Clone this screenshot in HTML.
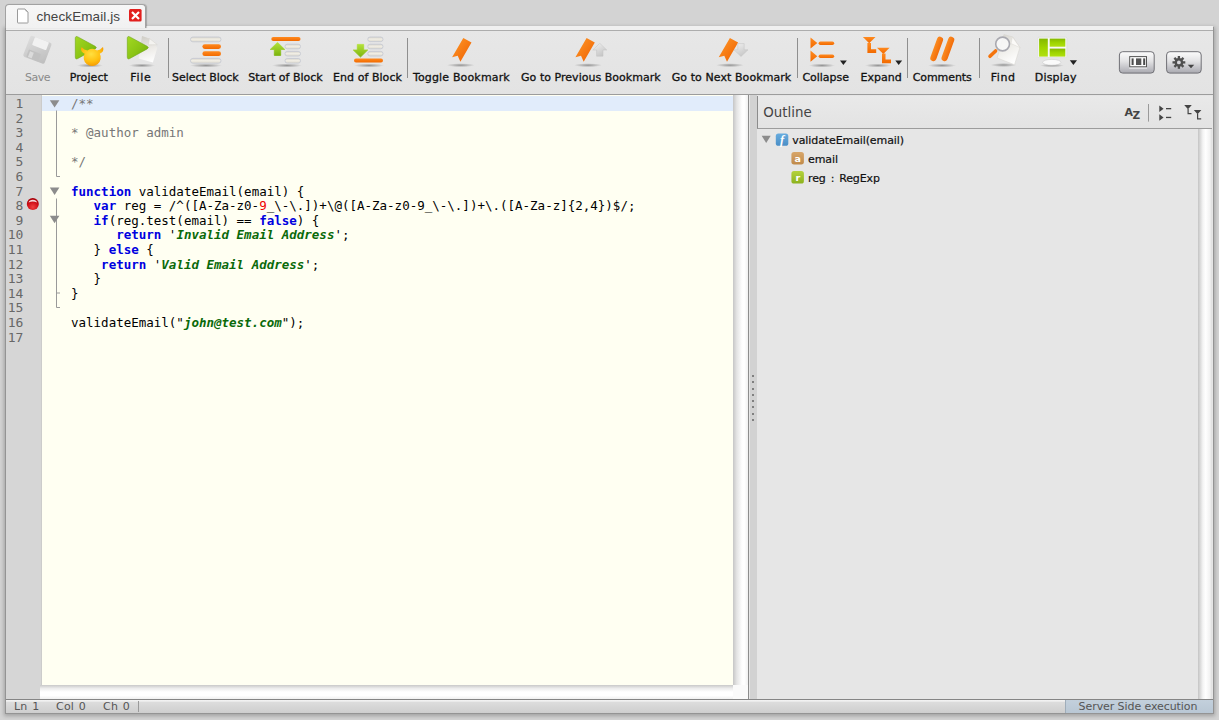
<!DOCTYPE html>
<html><head><meta charset="utf-8"><title>checkEmail.js</title>
<style>
html,body{margin:0;padding:0}
body{width:1219px;height:720px;overflow:hidden;background:#d3d3d3;position:relative;font-family:"DejaVu Sans","Liberation Sans",sans-serif;font-size:11px;color:#111}
.abs{position:absolute}
#frame{left:6px;top:28px;width:1207px;height:685px;background:#e5e5e5;box-shadow:0 0 0 1px #949494,0 1px 4px 2px rgba(0,0,0,.24)}
#tab{left:5px;top:4px;width:141px;height:24px;box-sizing:border-box;border:1px solid #a2a2a2;border-bottom:none;border-radius:4px 4px 0 0;background:linear-gradient(#f7f7f7,#f1f1f1);z-index:3;box-shadow:1px 0 1px rgba(0,0,0,.22)}
#tab .t{left:30.4px;top:3.6px;font:13.5px "Liberation Sans",sans-serif;color:#444;white-space:nowrap;letter-spacing:.1px}
#tabstrip{left:6px;top:26px;width:1207px;height:4px;background:#f0f0f0;border-bottom:1px solid #adadad;z-index:2}
#toolbar{left:6px;top:31px;width:1207px;height:63px;background:linear-gradient(#e7e7e7,#e3e3e3);border-bottom:1px solid #9c9c9c}
.lbl{position:absolute;top:71.3px;transform:translateX(-50%);white-space:nowrap;font-size:11px;line-height:14px;color:#111;font-weight:normal;-webkit-text-stroke:.3px #111}
.sep{position:absolute;top:38px;width:1px;height:40px;background:#8f8f8f}
#gutter{left:6px;top:95px;width:35.6px;height:604px;background:#d6d6d6;border-right:1.8px solid #cccccb;box-sizing:border-box}
#code{left:41.6px;top:95px;width:691.4px;height:590px;background:#fffff2}
#hl{left:41.6px;top:96px;width:691.4px;height:15.3px;background:#e1ecfb}
pre{margin:0}
.ln{position:absolute;left:5.6px;width:17.8px;text-align:right;font:13px/14.6px "DejaVu Sans Mono","Liberation Mono",monospace;color:#686868;white-space:pre}
.cl{position:absolute;left:71px;font:12.5px/14.6px "DejaVu Sans Mono","Liberation Mono",monospace;color:#000;white-space:pre}
.k{color:#0000e0;font-weight:bold}
.s{color:#0a6a0a;font-weight:bold;font-style:italic}
.c{color:#777}
.r{color:#e00}
#vsb{left:733px;top:95px;width:15px;height:590px;background:linear-gradient(90deg,#c6c6c6,#e4e4e4 25%,#fdfdfd 60%,#fff 75%,#f0f0f0)}
#hsb{left:40px;top:685px;width:693px;height:14px;background:linear-gradient(#c9c9c9,#ededed 25%,#fff 50%,#fff 75%,#f0f0f0)}
#split{left:748px;top:95px;width:9px;height:604px;background:linear-gradient(90deg,#e6e6e6 0,#e6e6e6 1px,#d2d2d2 1.5px);border-left:1px solid #8c8c8c;box-sizing:border-box}
#outline{left:757px;top:96px;width:455px;height:603px;background:#e6e6e6}
#ohead{left:757px;top:96px;width:454px;height:32px;border-bottom:1px solid #9c9c9c;border-left:1px solid #8c8c8c;background:linear-gradient(#e9e9e9,#e3e3e3)}
#osb{left:1198px;top:129px;width:14px;height:570px;background:linear-gradient(90deg,#c4c4c4,#f4f4f4 35%,#fff 55%,#f2f2f2 85%,#ddd)}
#status{left:6px;top:699px;width:1207px;height:14px;background:linear-gradient(#f4f4f4 0,#eee 1.2px,#dcdcdc 2.5px,#cecece 100%);border-top:1px solid #858585;box-sizing:border-box}
.st{position:absolute;top:700px;font-size:11px;line-height:14px;color:#555;white-space:nowrap;word-spacing:1px;letter-spacing:.2px}
.oi{position:absolute;font-size:11px;line-height:14px;letter-spacing:-.1px;color:#111;white-space:nowrap;-webkit-text-stroke:.2px #111}
</style></head><body>
<div id="frame" class="abs"></div>
<div id="tabstrip" class="abs"></div>
<div id="tab" class="abs">
 <svg class="abs" style="left:10px;top:3px" width="13" height="16" viewBox="0 0 13 16"><path d="M1.500 1.500q0-.5.500-.5h7l3 3v10.500q0 .5-.5.500h-9.500q-.500 0-.500-.500z" fill="#fff" stroke="#9a9a9a"/><path d="M9 1q.2 2.600 3 3" fill="none" stroke="#b0b0b0" stroke-width=".8"/></svg>
 <span class="abs t">checkEmail.js</span>
 <svg class="abs" style="left:123.300px;top:3.500px" width="13" height="13" viewBox="0 0 13 13"><rect width="12.600" height="12.600" rx="1.500" fill="#e2201e"/><path d="M3 3l7 7M10 3l-7 7" stroke="#fff" stroke-width="2.2"/></svg>
</div>
<div id="toolbar" class="abs"></div>
<!--TOOLBAR-->
<svg class="abs" style="left:0;top:0" width="1219" height="95" viewBox="0 0 1219 95">
<defs>
<linearGradient id="og" x1="0" y1="0" x2="0" y2="1"><stop offset="0" stop-color="#ff8a1f"/><stop offset="1" stop-color="#f26a00"/></linearGradient>
<linearGradient id="og2" x1="0" y1="0" x2="1" y2="1"><stop offset="0" stop-color="#ff9a2a"/><stop offset="1" stop-color="#ee5e00"/></linearGradient>
<linearGradient id="gg" x1="0" y1="0" x2="0" y2="1"><stop offset="0" stop-color="#b4e23a"/><stop offset="1" stop-color="#7cb40e"/></linearGradient>
<linearGradient id="gg2" x1="0" y1="0" x2="1" y2="1"><stop offset="0" stop-color="#a2d822"/><stop offset=".55" stop-color="#8ac414"/><stop offset="1" stop-color="#6aa60c"/></linearGradient>
<linearGradient id="cr" x1="0" y1="0" x2="0" y2="1"><stop offset="0" stop-color="#d6d3c9"/><stop offset=".45" stop-color="#f0ede4"/><stop offset="1" stop-color="#dedbd0"/></linearGradient>
<linearGradient id="btn" x1="0" y1="0" x2="0" y2="1"><stop offset="0" stop-color="#fcfcfc"/><stop offset=".45" stop-color="#e2e2e4"/><stop offset="1" stop-color="#a9a9b0"/></linearGradient>
<radialGradient id="sh"><stop offset="0" stop-color="#000" stop-opacity=".35"/><stop offset="1" stop-color="#000" stop-opacity="0"/></radialGradient>
<radialGradient id="yl" cx=".45" cy=".35" r=".7"><stop offset="0" stop-color="#ffe040"/><stop offset=".6" stop-color="#ffc010"/><stop offset="1" stop-color="#f59a00"/></radialGradient>
<linearGradient id="pp" x1=".3" y1="0" x2=".5" y2="1"><stop offset="0" stop-color="#cfcdc6"/><stop offset=".5" stop-color="#eceae6"/><stop offset="1" stop-color="#fdfdfd"/></linearGradient>
<linearGradient id="fl" x1="0" y1="0" x2="1" y2="1"><stop offset="0" stop-color="#dcdcdc"/><stop offset="1" stop-color="#b4b4b4"/></linearGradient>
<linearGradient id="lg" x1="0" y1="0" x2="0" y2="1"><stop offset="0" stop-color="#84b800"/><stop offset=".5" stop-color="#9ed400"/><stop offset="1" stop-color="#b0e010"/></linearGradient>
<linearGradient id="pp2" x1=".2" y1="0" x2=".6" y2="1"><stop offset="0" stop-color="#d8d6d0"/><stop offset=".5" stop-color="#efeeea"/><stop offset="1" stop-color="#fff"/></linearGradient>
<linearGradient id="ar" x1="0" y1="0" x2=".6" y2="1"><stop offset="0" stop-color="#f2f2f2"/><stop offset="1" stop-color="#c6c6c6"/></linearGradient>
</defs>
<!-- shadows -->
<g fill="url(#sh)">
<ellipse cx="90" cy="65.500" rx="13" ry="2"/>
<ellipse cx="142" cy="65.500" rx="13" ry="2"/>
<ellipse cx="206" cy="65.500" rx="16" ry="2"/>
<ellipse cx="287" cy="65.500" rx="15" ry="2"/>
<ellipse cx="369" cy="65.500" rx="15" ry="2"/>
<ellipse cx="460.700" cy="65.200" rx="14" ry="2"/>
<ellipse cx="588" cy="65.200" rx="14" ry="2"/>
<ellipse cx="730" cy="65.200" rx="14" ry="2"/>
<ellipse cx="822" cy="65.500" rx="13" ry="2"/>
<ellipse cx="878" cy="65.500" rx="13" ry="2"/>
<ellipse cx="942" cy="65.500" rx="14" ry="2"/>
<ellipse cx="1003.500" cy="65" rx="13" ry="2"/>
<ellipse cx="1052" cy="65.500" rx="12" ry="1.800"/>
</g>
<!-- Save (disabled floppy) -->
<g transform="translate(37.400 49.800) rotate(21)" opacity=".8">
<rect x="-11.400" y="-11.200" width="22.800" height="22.400" rx="2" fill="url(#fl)"/>
<rect x="-6.800" y="-11.200" width="15" height="8.600" rx="1" fill="#f4f4f4"/>
<rect x="-8" y="2.600" width="13" height="8" rx="1" fill="#b9b9b9"/>
<rect x="-6.300" y="4" width="4" height="6" fill="#d9d9d9"/>
</g>
<!-- Project -->
<path d="M75.300 38.400q0-2.800 2.500-1.500l17.400 9.400q2.200 1.300 0 2.600l-17.400 9.600q-2.500 1.300-2.500-1.500z" fill="url(#gg2)" stroke="#6fa614" stroke-width=".6"/>
<path d="M81.800 48q-.9 3.600 3.600 5.500a7.900 7.900 0 1 0 13.600 0q4.500-1.900 3.600-5.500-1.300 2.600-5.600 3.200a7.900 7.900 0 0 0-9.600 0q-4.300-.6-5.600-3.200z" fill="url(#yl)" stroke="url(#yl)" stroke-width="1.300" stroke-linejoin="round"/>
<!-- File -->
<path d="M142 35.900l7.500 2.600 7.800 9.200-4.400 14.800-14.300-4z" fill="url(#pp)"/>
<path d="M149.500 38.500l-1.200 6.300 9-.1z" fill="#f4f3f0" stroke="#cfccc6" stroke-width=".4"/>
<path d="M127.300 38.400q0-2.800 2.500-1.500l17.400 9.400q2.200 1.300 0 2.600l-17.400 9.600q-2.500 1.300-2.500-1.500z" fill="url(#gg2)" stroke="#6fa614" stroke-width=".6"/>
<!-- Select Block -->
<g>
<rect x="190.500" y="37" width="30.500" height="4.800" rx="2.400" fill="url(#cr)" stroke="#c6cad2" stroke-width=".9"/>
<rect x="202.400" y="44.200" width="18.600" height="4.800" rx="2.400" fill="url(#og)"/>
<rect x="202.400" y="51.300" width="18.600" height="4.800" rx="2.400" fill="url(#og)"/>
<rect x="190.500" y="58.400" width="30.500" height="4.800" rx="2.400" fill="url(#cr)" stroke="#c6cad2" stroke-width=".9"/>
</g>
<!-- Start of Block -->
<g>
<rect x="271.300" y="37" width="29.200" height="4" rx="2" fill="url(#og)"/>
<rect x="285" y="44.200" width="15.500" height="4.600" rx="2.300" fill="url(#cr)" stroke="#c6cad2" stroke-width=".9"/>
<rect x="285" y="51.400" width="15.500" height="4.600" rx="2.300" fill="url(#cr)" stroke="#c6cad2" stroke-width=".9"/>
<rect x="285" y="58.500" width="15.500" height="4.600" rx="2.300" fill="url(#cr)" stroke="#c6cad2" stroke-width=".9"/>
<path d="M277.500 42.400l7.200 7h-4v6h-6.400v-6h-4z" fill="url(#gg)" stroke="url(#gg)" stroke-width=".8" stroke-linejoin="round"/>
</g>
<!-- End of Block -->
<g>
<rect x="367.800" y="37" width="15.200" height="4.600" rx="2.300" fill="url(#cr)" stroke="#c6cad2" stroke-width=".9"/>
<rect x="367.800" y="44.200" width="15.200" height="4.600" rx="2.300" fill="url(#cr)" stroke="#c6cad2" stroke-width=".9"/>
<rect x="367.800" y="51.400" width="15.200" height="4.600" rx="2.300" fill="url(#cr)" stroke="#c6cad2" stroke-width=".9"/>
<rect x="354" y="58.500" width="29" height="4" rx="2" fill="url(#og)"/>
<path d="M360.500 57l-7.200-7h4v-5.600h6.400v5.600h4z" fill="url(#gg)" stroke="url(#gg)" stroke-width=".8" stroke-linejoin="round"/>
</g>
<!-- Bookmarks -->
<path id="rb" d="M463.300 38.100l8.200 4.400-11.100 19.200-2.700-5.900-5.600 1.500z" fill="url(#og2)"/>
<path d="M586.600 38.100l8.200 4.400-11.100 19.200-2.700-5.900-5.600 1.500z" fill="url(#og2)"/>
<path d="M729.900 38.100l8.200 4.400-11.100 19.200-2.700-5.900-5.600 1.500z" fill="url(#og2)"/>
<path d="M599.800 43.300l7 6.700h-3.800v6.200h-6.400v-6.200h-3.800z" fill="url(#ar)" stroke="#c2c2c2" stroke-width=".5"/>
<path d="M741 56.500l-7-6.700h3.800v-6.200h6.400v6.200h3.800z" fill="url(#ar)" stroke="#c2c2c2" stroke-width=".5"/>
<!-- Collapse -->
<g fill="url(#og)">
<path d="M810.500 37.400l6.800 5.600-6.800 5.600z"/>
<path d="M810.500 50.600l6.800 5.600-6.800 5.600z"/>
<rect x="818.600" y="41.400" width="15.600" height="3.500" rx="1.750"/>
<rect x="818.600" y="54.500" width="15.600" height="3.500" rx="1.750"/>
</g>
<path d="M840 60.400h6.800l-3.400 4.600z" fill="#222"/>
<!-- Expand -->
<g fill="url(#og)">
<path d="M862.900 37.100h12.600l-6.300 6.200z"/>
<path d="M867.400 43h3.600v6.200h5.200v3.700h-8.800z"/>
<path d="M877 47.700h12.600l-6.300 6.200z"/>
<path d="M882 53.500h3.500v6h5.500v3.700h-9z"/>
</g>
<path d="M895.300 60.400h6.800l-3.400 4.600z" fill="#222"/>
<!-- Comments -->
<g stroke-width="6.200" stroke-linecap="round" fill="none">
<path d="M940 39.800l-6.600 18.200" stroke="url(#og2)"/>
<path d="M951.200 39.800l-6.600 18.200" stroke="url(#og2)"/>
</g>
<!-- Find -->
<path d="M1003.900 34.500l8.800 2.400 7.200 10.600-5.400 17.200-17.400-6.700z" fill="url(#pp2)" stroke="#d4d2cc" stroke-width=".5"/>
<path d="M1012.500 37l-1.500 6.500 8.800 4z" fill="#fbfaf8" stroke="#d4d2cc" stroke-width=".4"/>
<path d="M995.600 51l-5.600 5.300" stroke="#f4740c" stroke-width="3.600" stroke-linecap="round"/>
<circle cx="1002.600" cy="44" r="6.900" fill="#fafafa" fill-opacity=".82" stroke="#a9a9b0" stroke-width="1.600"/>
<!-- Display -->
<rect x="1037.800" y="37.200" width="29" height="20.400" rx="1.200" fill="#f8f8f8" stroke="#d6d6d6" stroke-width=".6"/>
<rect x="1039.100" y="38.600" width="8.700" height="18" fill="url(#lg)"/>
<rect x="1049.700" y="38.600" width="15.600" height="8.100" fill="url(#lg)"/>
<rect x="1049.700" y="48.600" width="15.600" height="8" fill="url(#lg)"/>
<path d="M1049.500 57.600h4.800l.8 4h-6.400z" fill="#e4e4e4"/>
<ellipse cx="1051.800" cy="62.300" rx="9.200" ry="2.900" fill="#fafafa" stroke="#cdcdcd" stroke-width=".6"/>
<path d="M1069.800 60.300h7.200l-3.600 4.600z" fill="#222"/>
<!-- Buttons -->
<rect x="1119.400" y="51.700" width="34.800" height="21.400" rx="3.300" fill="url(#btn)" stroke="#707076" stroke-width="1"/>
<rect x="1166.600" y="51.700" width="34.600" height="21.400" rx="3.300" fill="url(#btn)" stroke="#707076" stroke-width="1"/>
<rect x="1129.200" y="67.300" width="17.800" height="1.200" fill="#fff" opacity=".9"/>
<rect x="1129.700" y="56.600" width="16.800" height="10.200" fill="#fcfcfc" stroke="#555" stroke-width="1"/>
<rect x="1131.600" y="58.400" width="2" height="6.600" fill="#4a4a4a"/><rect x="1136" y="58.400" width="5.300" height="6.600" fill="#555"/><rect x="1143.200" y="58.400" width="2" height="6.600" fill="#4a4a4a"/>
<g transform="translate(1178.900 62.400)" fill="#505050">
<circle r="4.300"/>
<rect x="-1.150" y="-6.400" width="2.300" height="12.800"/><rect x="-6.400" y="-1.150" width="12.800" height="2.300"/>
<g transform="rotate(45)"><rect x="-1.150" y="-6.400" width="2.300" height="12.800"/><rect x="-6.400" y="-1.150" width="12.800" height="2.300"/></g>
<circle r="1.900" fill="#d8d8dc"/>
</g>
<path d="M1187.800 64.700h6.400l-3.200 3.500z" fill="#444"/>
</svg>
<div class="sep" style="left:168px"></div>
<div class="sep" style="left:407px"></div>
<div class="sep" style="left:797px"></div>
<div class="sep" style="left:907px"></div>
<div class="sep" style="left:979px"></div>
<span class="lbl" style="left:37.500px;color:#8a8a8a;-webkit-text-stroke:0;letter-spacing:-0.47px">Save</span>
<span class="lbl" style="left:88.800px;letter-spacing:0.1px">Project</span>
<span class="lbl" style="left:140.800px;letter-spacing:0.73px">File</span>
<span class="lbl" style="left:205.400px;letter-spacing:-0.05px">Select Block</span>
<span class="lbl" style="left:285.500px;letter-spacing:0.02px">Start of Block</span>
<span class="lbl" style="left:367.500px;letter-spacing:0.05px">End of Block</span>
<span class="lbl" style="left:461.400px;letter-spacing:0.16px">Toggle Bookmark</span>
<span class="lbl" style="left:590.900px;letter-spacing:0.03px">Go to Previous Bookmark</span>
<span class="lbl" style="left:731.500px;letter-spacing:0.08px">Go to Next Bookmark</span>
<span class="lbl" style="left:825.700px;letter-spacing:-0.03px">Collapse</span>
<span class="lbl" style="left:881.100px;letter-spacing:0.02px">Expand</span>
<span class="lbl" style="left:942.200px;letter-spacing:-0.07px">Comments</span>
<span class="lbl" style="left:1003.100px;letter-spacing:0.6px">Find</span>
<span class="lbl" style="left:1055.700px;letter-spacing:0.18px">Display</span>
<!--/TOOLBAR-->
<div id="gutter" class="abs"></div>
<div id="code" class="abs"></div>
<div id="hl" class="abs"></div>
<!--CODE-->
<div class="ln" style="top:97.0px">1</div>
<div class="ln" style="top:111.6px">2</div>
<div class="ln" style="top:126.2px">3</div>
<div class="ln" style="top:140.8px">4</div>
<div class="ln" style="top:155.4px">5</div>
<div class="ln" style="top:170.0px">6</div>
<div class="ln" style="top:184.6px">7</div>
<div class="ln" style="top:199.2px">8</div>
<div class="ln" style="top:213.8px">9</div>
<div class="ln" style="top:228.4px">10</div>
<div class="ln" style="top:243.0px">11</div>
<div class="ln" style="top:257.6px">12</div>
<div class="ln" style="top:272.2px">13</div>
<div class="ln" style="top:286.8px">14</div>
<div class="ln" style="top:301.4px">15</div>
<div class="ln" style="top:316.0px">16</div>
<div class="ln" style="top:330.6px">17</div>
<div class="cl" style="top:97.0px"><span class="c">/**</span></div>
<div class="cl" style="top:126.2px"><span class="c">* @author admin</span></div>
<div class="cl" style="top:155.4px"><span class="c">*/</span></div>
<div class="cl" style="top:184.6px"><span class="k">function</span> validateEmail(email) {</div>
<div class="cl" style="top:199.2px">   <span class="k">var</span> reg = /^([A-Za-z0-<span class="r">9</span>_\-\.])+\@([A-Za-z0-9_\-\.])+\.([A-Za-z]{2,4})$/;</div>
<div class="cl" style="top:213.8px">   <span class="k">if</span>(reg.test(email) == <span class="k">false</span>) {</div>
<div class="cl" style="top:228.4px">      <span class="k">return</span> '<span class="s">Invalid Email Address</span>';</div>
<div class="cl" style="top:243.0px">   } <span class="k">else</span> {</div>
<div class="cl" style="top:257.6px">    <span class="k">return</span> '<span class="s">Valid Email Address</span>';</div>
<div class="cl" style="top:272.2px">   }</div>
<div class="cl" style="top:286.8px">}</div>
<div class="cl" style="top:316.0px">validateEmail("<span class="s">john@test.com</span>");</div>
<!--/CODE-->
<svg class="abs" style="left:0;top:0" width="120" height="360" viewBox="0 0 120 360">
<g fill="none" stroke="#9a9a9a" stroke-width="1">
<path d="M56.5 110.5V176.5H60"/>
<path d="M56.5 198.5V307.5H60M56.5 293H60"/>
</g>
<g fill="#8c8c8c">
<path d="M49.8 100.2h9.6l-4.8 7.4z"/>
<path d="M49.8 187.6h9.6l-4.8 7.4z"/>
<path d="M49.8 215.8h9.6l-4.8 7.4z"/>
</g>
<defs><radialGradient id="bp" cx=".5" cy=".75" r=".7"><stop offset="0" stop-color="#f04040"/><stop offset=".6" stop-color="#d01018"/><stop offset="1" stop-color="#a80008"/></radialGradient></defs>
<circle cx="32.8" cy="204.1" r="6" fill="url(#bp)"/>
<path d="M28.6 202.6a4.3 3.6 0 0 1 8.4 0q-4.2-2.2-8.400 0z" fill="#fff" opacity=".85"/>
</svg>

<div id="vsb" class="abs"></div>
<div id="hsb" class="abs"></div>
<div class="abs" style="left:733px;top:685px;width:15px;height:14px;background:#fafafa"></div>
<div id="split" class="abs"></div>
<div id="outline" class="abs"></div>
<div class="abs" style="left:752px;top:375.00px;width:2px;height:2px;background:#808080"></div><div class="abs" style="left:752px;top:381.25px;width:2px;height:2px;background:#808080"></div><div class="abs" style="left:752px;top:387.50px;width:2px;height:2px;background:#808080"></div><div class="abs" style="left:752px;top:393.75px;width:2px;height:2px;background:#808080"></div><div class="abs" style="left:752px;top:400.00px;width:2px;height:2px;background:#808080"></div><div class="abs" style="left:752px;top:406.25px;width:2px;height:2px;background:#808080"></div><div class="abs" style="left:752px;top:412.50px;width:2px;height:2px;background:#808080"></div><div class="abs" style="left:752px;top:418.75px;width:2px;height:2px;background:#808080"></div>
<div id="ohead" class="abs"></div>
<div id="osb" class="abs"></div>
<!--OUTLINE-->
<span class="abs" style="left:763.3px;top:103.8px;font-size:13.4px;line-height:18px;color:#444;white-space:nowrap">Outline</span>
<svg class="abs" style="left:757px;top:96px" width="456" height="100" viewBox="757 96 456 100">
<defs>
<linearGradient id="bf" x1="0" y1="0" x2="0" y2="1"><stop offset="0" stop-color="#68acde"/><stop offset="1" stop-color="#4a8ec6"/></linearGradient>
<linearGradient id="ba" x1="0" y1="0" x2="0" y2="1"><stop offset="0" stop-color="#d8a66a"/><stop offset="1" stop-color="#c08a4a"/></linearGradient>
<linearGradient id="br" x1="0" y1="0" x2="0" y2="1"><stop offset="0" stop-color="#b4d23c"/><stop offset="1" stop-color="#8cb21e"/></linearGradient>
</defs>
<path d="M761.700 135.700h9l-4.500 7.300z" fill="#8c8c8c"/>
<rect x="775.800" y="133.600" width="12.500" height="12.200" rx="2.600" fill="url(#bf)"/>
<text x="782.200" y="143.800" text-anchor="middle" font-family="Liberation Serif,serif" font-style="italic" font-weight="bold" font-size="12.500" fill="#fff">f</text>
<rect x="791.400" y="152" width="12.500" height="12.400" rx="2.600" fill="url(#ba)"/>
<text x="797.700" y="161.600" text-anchor="middle" font-family="DejaVu Sans,sans-serif" font-weight="bold" font-size="9.500" fill="#fff">a</text>
<rect x="791.400" y="171.100" width="12.500" height="12.400" rx="2.600" fill="url(#br)"/>
<text x="797.900" y="180.800" text-anchor="middle" font-family="DejaVu Sans,sans-serif" font-weight="bold" font-size="9.500" fill="#fff">r</text>
<g fill="#444">
<text x="1124.600" y="116.300" font-family="DejaVu Sans,sans-serif" font-weight="bold" font-size="11">A</text>
<text x="1132.600" y="119.400" font-family="DejaVu Sans,sans-serif" font-weight="bold" font-size="10.500">Z</text>
<path d="M1159.300 105.500l4.300 3.300-4.300 3.300zM1159.300 114.200l4.300 3.300-4.300 3.300z"/>
<rect x="1166" y="108" width="5.200" height="1.300"/><rect x="1166" y="116.800" width="5.200" height="1.300"/>
<path d="M1184.200 105h7.600l-3.800 4.200zM1193.800 110.100h7.600l-3.800 4.200z"/>
<path d="M1187.500 109h1.200v4h2.800v1.200h-4zM1197 114h1.200v4.300h3v1.200h-4.200z"/>
</g>
<rect x="1148" y="104" width="1" height="17.600" fill="#9a9a9a"/>
</svg>
<span class="oi" style="left:792.300px;top:134.300px">validateEmail(email)</span>
<span class="oi" style="left:808px;top:153px">email</span>
<span class="oi" style="left:808px;top:171.800px;word-spacing:1.5px">reg : RegExp</span>
<!--/OUTLINE-->
<div id="status" class="abs"></div>
<!--STATUS-->
<span class="st" style="left:14px">Ln 1</span>
<span class="st" style="left:56px">Col 0</span>
<span class="st" style="left:103px">Ch 0</span>
<div class="abs" style="left:138px;top:701px;width:1px;height:11px;background:#9a9a9a"></div>
<div class="abs" style="left:1065px;top:700px;width:147px;height:13px;background:linear-gradient(#c3d0dc,#b9c7d4);border-left:1px solid #9fadba"></div>
<span class="st" style="left:1078.600px;letter-spacing:-.08px;word-spacing:0">Server Side execution</span>
<!--/STATUS-->
</body></html>
